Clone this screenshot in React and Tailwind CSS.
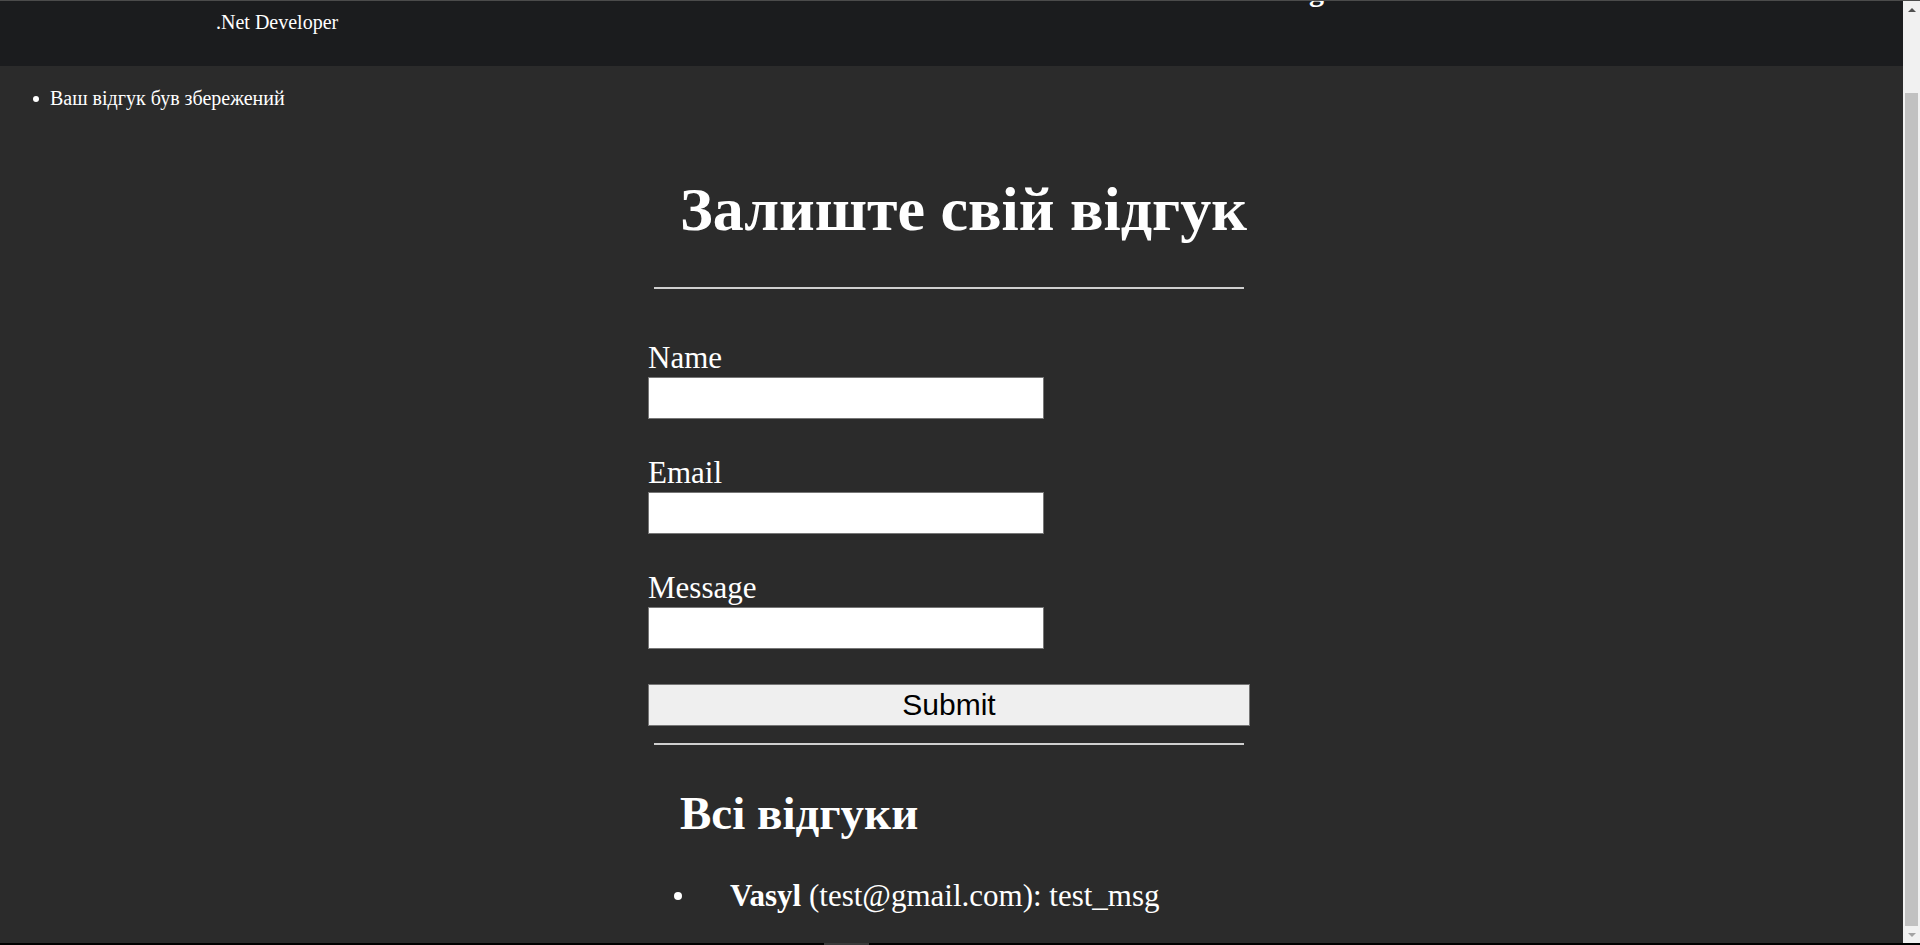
const serif = { fontFamily: '"Liberation Serif", "Times New Roman", serif' };

function Scrollbar() {
  return (
    <div className="w-[17px] bg-[#f1f1f1] flex flex-col items-center shrink-0">
      <div className="h-[17px] flex items-center justify-center">
        <div className="w-0 h-0 border-l-[4px] border-r-[4px] border-b-[4px] border-l-transparent border-r-transparent border-b-[#505050]" />
      </div>
      <div className="h-[75px]" />
      <div className="w-[13px] flex-1 bg-[#c1c1c1]" />
      <div className="h-[17px] flex items-center justify-center">
        <div className="w-0 h-0 border-l-[4px] border-r-[4px] border-t-[4px] border-l-transparent border-r-transparent border-t-[#a3a3a3]" />
      </div>
    </div>
  );
}

function Field({ label, first }) {
  return (
    <div className={first ? "mt-[52px]" : "mt-[37px]"}>
      <label className="block text-[31px] leading-[34px] text-white">{label}</label>
      <input
        type="text"
        className="block mt-[2px] w-[396px] h-[42px] bg-white border border-[#767676] outline-none"
      />
    </div>
  );
}

export default function App() {
  const reviews = [{ name: "Vasyl", email: "test@gmail.com", message: "test_msg" }];

  return (
    <div className="h-[945px] w-full overflow-hidden flex flex-col border-t border-[#4b4b4b] bg-[#2b2b2b]" style={serif}>
      <div className="flex flex-1 min-h-0">
        <div className="flex-1 overflow-hidden">
          {/* header (page is scrolled, top part cut off) */}
          <div className="h-[65px] bg-[#1b1c1e] overflow-hidden flex items-start pl-[216px]">
            <div className="mt-[10px] w-[1093px] text-[20px] leading-[23px] text-white">.Net Developer</div>
            <div className="-mt-[27px] text-[30px] leading-[34px] font-bold text-white">g</div>
          </div>

          {/* flash messages */}
          <ul className="mt-[21px] pl-[33px]">
            <li className="flex items-center text-[20px] leading-[23px] text-white">
              <span className="w-[6px] h-[6px] rounded-full bg-white mr-[11px]" />
              Ваш відгук був збережений
            </li>
          </ul>

          <div className="ml-[648px] w-[602px] text-white">
            <h1 className="mt-[65px] pl-[32px] text-[62px] leading-[69px] font-bold">Залиште свій відгук</h1>
            <hr className="mt-[43px] mx-[6px] h-[2px] border-0 bg-[#cfcfcf]" />

            <form onSubmit={(e) => e.preventDefault()}>
              <Field label="Name" first />
              <Field label="Email" />
              <Field label="Message" />
              <button
                type="submit"
                className="block mt-[35px] w-[602px] h-[42px] bg-[#efefef] border border-[#767676] text-black text-[30px] leading-none"
                style={{ fontFamily: '"Liberation Sans", Arial, sans-serif' }}
              >
                Submit
              </button>
            </form>
            <hr className="mt-[17px] mx-[6px] h-[2px] border-0 bg-[#cfcfcf]" />

            <h2 className="mt-[42px] pl-[32px] text-[47px] leading-[52px] font-bold">Всі відгуки</h2>
            <ul className="mt-[40px]">
              {reviews.map((r, i) => (
                <li key={i} className="flex items-center text-[31px] leading-[34px]">
                  <span className="ml-[26px] w-[8px] h-[8px] rounded-full bg-white mr-[48px]" />
                  <span>
                    <b>{r.name}</b> ({r.email}): {r.message}
                  </span>
                </li>
              ))}
            </ul>
          </div>
        </div>
        <Scrollbar />
      </div>
      <div className="h-[2px] bg-black flex pl-[824px]">
        <div className="w-[45px] bg-[#3a3a3a]" />
      </div>
    </div>
  );
}
